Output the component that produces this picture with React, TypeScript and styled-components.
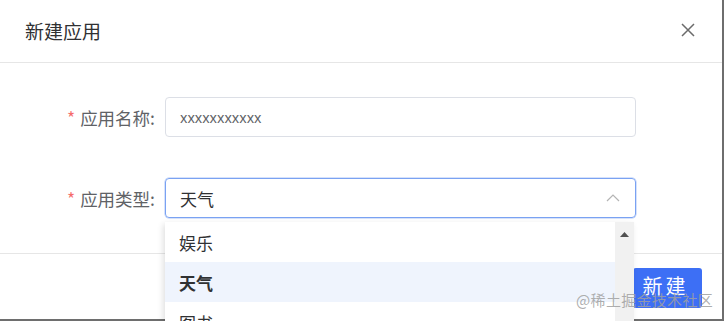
import * as React from "react";
import styled, { createGlobalStyle } from "styled-components";

const GlobalStyle = createGlobalStyle`
  html, body {
    margin: 0;
    padding: 0;
    background: #6e6e6e;
    overflow: hidden;
  }
  body {
    font-family: "Noto Sans CJK SC", "Noto Sans", sans-serif;
  }
`;

const SPage = styled.div`
  width: 724px;
  height: 321px;
  position: relative;
  overflow: hidden;
`;

const SDialog = styled.div`
  width: 722px;
  height: 319px;
  background: #fff;
  display: flex;
  flex-direction: column;
  box-sizing: border-box;
`;

const SHeader = styled.div`
  height: 62px;
  flex: none;
  display: flex;
  align-items: center;
  justify-content: space-between;
  padding: 0 26px 0 25px;
  border-bottom: 1px solid #e6e6e6;
`;

const STitle = styled.div`
  font-size: 19px;
  color: #303133;
  line-height: 1;
  margin-top: -2px;
`;

const SClose = styled.button`
  border: 0;
  background: transparent;
  padding: 0;
  width: 16px;
  height: 16px;
  display: flex;
  cursor: pointer;
  margin-top: -2px;
`;

const SBody = styled.div`
  flex: 1;
  padding-top: 34px;
  display: flex;
  flex-direction: column;
  gap: 41px;
  border-bottom: 1px solid #e6e6e6;
`;

const SFormItem = styled.div`
  display: flex;
  align-items: center;
  height: 40px;
`;

const SLabel = styled.label`
  width: 165px;
  flex: none;
  box-sizing: border-box;
  padding-right: 10px;
  text-align: right;
  font-size: 17.5px;
  color: #606266;
  white-space: nowrap;
`;

const SRequired = styled.span`
  color: #f56c6c;
  margin-right: 5px;
`;

const SField = styled.div<{ $focused?: boolean }>`
  position: relative;
  width: 471px;
  height: 40px;
  box-sizing: border-box;
  border: 1px solid ${(p) => (p.$focused ? "#7aa2f2" : "#dcdfe6")};
  box-shadow: ${(p) => (p.$focused ? "0 0 0 0.5px rgba(122, 162, 242, 0.6)" : "none")};
  border-radius: 4px;
  display: flex;
  align-items: center;
  padding: 0 14px;
  font-size: 17px;
  color: ${(p) => (p.$focused ? "#303133" : "#606266")};
`;

const SInputText = styled.span`
  flex: 1;
  font-family: "Noto Sans", sans-serif;
  font-size: 14px;
`;

const SSelectText = styled.span`
  flex: 1;
`;

const SArrow = styled.span`
  display: flex;
  width: 14px;
  height: 14px;
  margin-right: 1px;
`;

const SDropdown = styled.div`
  position: absolute;
  left: -1px;
  top: 43px;
  width: 469px;
  height: 110px;
  background: #fff;
  box-shadow: -2px 2px 6px rgba(0, 0, 0, 0.12);
  display: flex;
  overflow: hidden;
  z-index: 2;
`;

const SOptions = styled.ul`
  flex: 1;
  list-style: none;
  margin: 0;
  padding: 0;
`;

const SOption = styled.li<{ $active?: boolean }>`
  height: 40px;
  display: flex;
  align-items: center;
  padding-left: 14px;
  font-size: 17px;
  color: #303133;
  background: ${(p) => (p.$active ? "#eff4fd" : "#fff")};
  font-weight: ${(p) => (p.$active ? 700 : 400)};
`;

const SScrollbar = styled.div`
  width: 19px;
  flex: none;
  background: #f1f1f1;
  display: flex;
  justify-content: center;
  padding-top: 10px;
  box-sizing: border-box;
`;

const SFooter = styled.div`
  flex: none;
  height: 65px;
  display: flex;
  justify-content: flex-end;
  padding: 14px 20px 0 0;
  box-sizing: border-box;
`;

const SButton = styled.button`
  width: 69px;
  height: 40px;
  border: 0;
  border-radius: 3px;
  background: #3d6ff5;
  color: #fff;
  font-family: "Noto Sans CJK SC", sans-serif;
  font-size: 20px;
  letter-spacing: 3px;
  padding: 0 4px 6px 0;
  display: flex;
  align-items: center;
  justify-content: center;
`;

const SWatermark = styled.div`
  position: absolute;
  right: 11px;
  bottom: 11px;
  font-size: 15px;
  color: rgba(160, 160, 160, 0.85);
  letter-spacing: 0.3px;
  z-index: 3;
  pointer-events: none;
`;

const App = () => {
  return (
    <SPage>
      <GlobalStyle />
      <SDialog>
        <SHeader>
          <STitle>新建应用</STitle>
          <SClose aria-label="close">
            <svg width="16" height="16" viewBox="0 0 16 16">
              <path d="M2 2 L14 14 M14 2 L2 14" stroke="#6b6b6b" strokeWidth="1.5" fill="none" />
            </svg>
          </SClose>
        </SHeader>
        <SBody>
          <SFormItem>
            <SLabel>
              <SRequired>*</SRequired>应用名称:
            </SLabel>
            <SField>
              <SInputText>xxxxxxxxxxx</SInputText>
            </SField>
          </SFormItem>
          <SFormItem>
            <SLabel>
              <SRequired>*</SRequired>应用类型:
            </SLabel>
            <SField $focused>
              <SSelectText>天气</SSelectText>
              <SArrow>
                <svg width="14" height="14" viewBox="0 0 14 14">
                  <polyline points="1,10 7,4 13,10" stroke="#b4b4b4" strokeWidth="1.2" fill="none" />
                </svg>
              </SArrow>
              <SDropdown>
                <SOptions>
                  <SOption>娱乐</SOption>
                  <SOption $active>天气</SOption>
                  <SOption>图书</SOption>
                </SOptions>
                <SScrollbar>
                  <svg width="9" height="5" viewBox="0 0 9 5">
                    <polygon points="0,5 4.5,0 9,5" fill="#505050" />
                  </svg>
                </SScrollbar>
              </SDropdown>
            </SField>
          </SFormItem>
        </SBody>
        <SFooter>
          <SButton>新建</SButton>
        </SFooter>
      </SDialog>
      <SWatermark>@稀土掘金技术社区</SWatermark>
    </SPage>
  );
};

export default App;
